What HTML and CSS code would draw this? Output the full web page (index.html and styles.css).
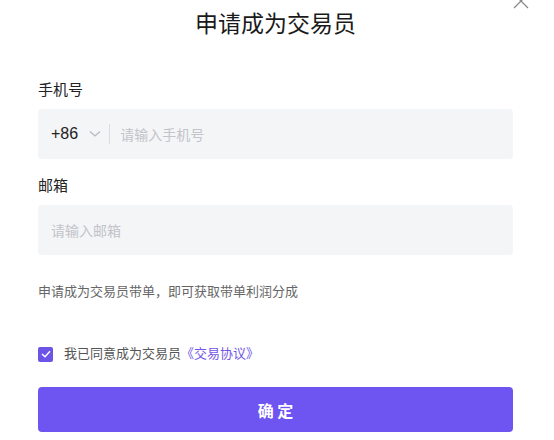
FILE: index.html
```html
<!DOCTYPE html>
<html lang="zh-CN">
<head>
  <meta charset="UTF-8" />
  <meta name="viewport" content="width=device-width, initial-scale=1.0"/>
  <title>申请成为交易员</title>
  <link rel="stylesheet" href="styles.css">
</head>
<body>

  <div class="dialog">
    <svg class="close" width="16" height="16" viewBox="0 0 16 16">
      <path d="M1 1 L15 15 M15 1 L1 15" stroke="#8a8a8a" stroke-width="1.3" fill="none"/>
    </svg>
    <h2>申请成为交易员</h2>

    <form id="applyForm">
      <label class="label label-first" for="phone">手机号</label>
      <div class="field">
        <span class="code">+86</span>
        <svg class="chevron" width="12" height="8" viewBox="0 0 12 8">
          <path d="M1 1.5 L6 6 L11 1.5" stroke="#b8b8c0" stroke-width="1.3" fill="none"/>
        </svg>
        <span class="divider"></span>
        <input type="tel" id="phone" placeholder="请输入手机号" />
      </div>

      <label class="label" for="email">邮箱</label>
      <div class="field">
        <input type="email" id="email" placeholder="请输入邮箱" />
      </div>

      <p class="hint">申请成为交易员带单，即可获取带单利润分成</p>

      <div class="agree">
        <span class="check">
          <svg width="10" height="8" viewBox="0 0 10 8">
            <path d="M1 4 L4 6.8 L9 1.2" stroke="#fff" stroke-width="1.4" fill="none"/>
          </svg>
        </span>
        <span>我已同意成为交易员<a href="#">《交易协议》</a></span>
      </div>

      <button type="submit">确 定</button>
    </form>
  </div>

</body>
</html>
```

FILE: styles.css
```css
body {
  margin: 0;
  background: #fff;
  font-family: "Liberation Sans", "Noto Sans CJK SC", sans-serif;
  color: #222;
}

.dialog {
  position: relative;
  padding: 0 41px 0 38px;
}

.close {
  position: absolute;
  top: -7px;
  right: 25px;
}

h2 {
  margin: 0;
  height: 44px;
  line-height: 44px;
  text-align: center;
  font-family: "Noto Sans CJK SC", sans-serif;
  font-size: 23px;
  font-weight: 400;
  color: #1a1a1a;
}

form {
  display: flex;
  flex-direction: column;
}

.label {
  margin-top: 16px;
  line-height: 22px;
  font-size: 15px;
  color: #222;
}

.label-first {
  margin-top: 35px;
}

.field {
  display: flex;
  align-items: center;
  height: 50px;
  margin-top: 8px;
  padding: 0 13px;
  background: #f4f5f7;
  border-radius: 4px;
}

.code {
  font-size: 16px;
  color: #222;
}

.chevron {
  margin-left: 11px;
}

.divider {
  width: 1px;
  height: 20px;
  margin: 0 10px 0 8px;
  background: #dcdce0;
}

input {
  flex: 1;
  border: none;
  outline: none;
  background: transparent;
  padding: 0;
  font-family: "Noto Sans CJK SC", sans-serif;
  font-size: 14px;
  color: #222;
}

input::placeholder {
  color: #c3c3ca;
}

.hint {
  margin: 27px 0 0;
  line-height: 20px;
  font-size: 13px;
  color: #666;
}

.agree {
  display: flex;
  align-items: center;
  gap: 11px;
  margin-top: 42px;
  line-height: 20px;
  font-size: 13px;
  color: #555;
}

.check {
  display: flex;
  align-items: center;
  justify-content: center;
  width: 15px;
  height: 15px;
  border-radius: 2px;
  background: #6c54e6;
}

.agree a {
  color: #7156e6;
  text-decoration: none;
}

button {
  height: 45px;
  margin-top: 23px;
  border: none;
  border-radius: 4px;
  background: #6e55f2;
  color: #fff;
  font-family: "Noto Sans CJK SC", sans-serif;
  font-size: 16px;
  font-weight: bold;
  cursor: pointer;
}
```
